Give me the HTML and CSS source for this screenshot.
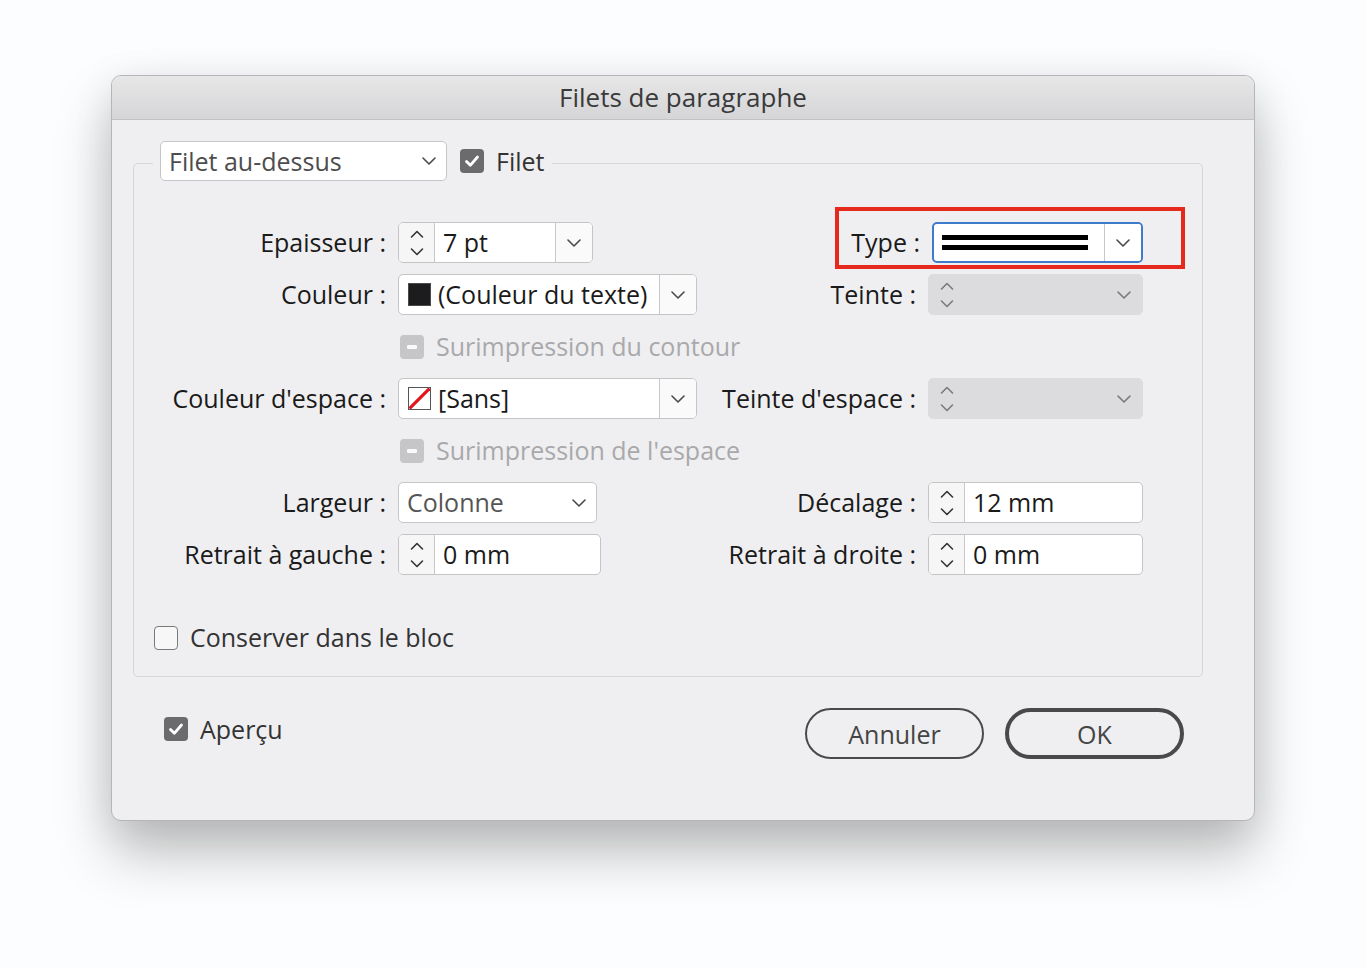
FILE: index.html
```html
<!DOCTYPE html>
<html lang="fr">
<head>
  <meta charset="UTF-8">
  <meta name="viewport" content="width=device-width, initial-scale=1.0">
  <title>Filets de paragraphe</title>
  <link rel="stylesheet" href="styles.css">
</head>
<body>
  <div class="dialog">
    <div class="titlebar">Filets de paragraphe</div>

    <fieldset class="group">
      <legend class="group-legend">
        <div class="group-head">
          <div class="select select-rule">
            <span>Filet au-dessus</span>
            <svg class="chev" width="14" height="8" viewBox="0 0 14 8"><path d="M1 1l6 6 6-6"/></svg>
          </div>
          <label class="check">
            <span class="box box-on"><svg width="24" height="24" viewBox="0 0 24 24"><path d="M6.5 12.5l3.8 3.8 7.2-8.3"/></svg></span>
            Filet
          </label>
        </div>
      </legend>

      <div class="form-grid">
        <div class="label">Epaisseur :</div>
        <div class="combo combo-weight">
          <div class="spin"><svg width="14" height="26" viewBox="0 0 14 26"><path d="M1.5 7l5.5-5.5 5.5 5.5M1.5 19l5.5 5.5 5.5-5.5"/></svg></div>
          <div class="field">7 pt</div>
          <div class="drop"><svg class="chev" width="14" height="8" viewBox="0 0 14 8"><path d="M1 1l6 6 6-6"/></svg></div>
        </div>
        <div class="label label-type">Type :</div>
        <div class="combo combo-type">
          <div class="field">
            <div class="double-line"><span></span><span></span></div>
          </div>
          <div class="drop"><svg class="chev" width="14" height="8" viewBox="0 0 14 8"><path d="M1 1l6 6 6-6"/></svg></div>
        </div>

        <div class="label">Couleur :</div>
        <div class="combo combo-color">
          <div class="field field-swatch"><span class="swatch swatch-black"></span>(Couleur du texte)</div>
          <div class="drop"><svg class="chev" width="14" height="8" viewBox="0 0 14 8"><path d="M1 1l6 6 6-6"/></svg></div>
        </div>
        <div class="label">Teinte :</div>
        <div class="combo combo-off">
          <div class="spin"><svg width="14" height="26" viewBox="0 0 14 26"><path d="M1.5 7l5.5-5.5 5.5 5.5M1.5 19l5.5 5.5 5.5-5.5"/></svg></div>
          <div class="field"></div>
          <div class="drop"><svg class="chev" width="14" height="8" viewBox="0 0 14 8"><path d="M1 1l6 6 6-6"/></svg></div>
        </div>

        <label class="check check-off row-span">
          <span class="box box-mixed"><span class="dash"></span></span>
          Surimpression du contour
        </label>

        <div class="label">Couleur d'espace :</div>
        <div class="combo combo-color">
          <div class="field field-swatch">
            <span class="swatch swatch-none"><svg width="23" height="23" viewBox="0 0 23 23"><path d="M1.5 21.5l20-20"/></svg></span>[Sans]
          </div>
          <div class="drop"><svg class="chev" width="14" height="8" viewBox="0 0 14 8"><path d="M1 1l6 6 6-6"/></svg></div>
        </div>
        <div class="label">Teinte d'espace :</div>
        <div class="combo combo-off">
          <div class="spin"><svg width="14" height="26" viewBox="0 0 14 26"><path d="M1.5 7l5.5-5.5 5.5 5.5M1.5 19l5.5 5.5 5.5-5.5"/></svg></div>
          <div class="field"></div>
          <div class="drop"><svg class="chev" width="14" height="8" viewBox="0 0 14 8"><path d="M1 1l6 6 6-6"/></svg></div>
        </div>

        <label class="check check-off row-span">
          <span class="box box-mixed"><span class="dash"></span></span>
          Surimpression de l'espace
        </label>

        <div class="label">Largeur :</div>
        <div class="select select-width">
          <span>Colonne</span>
          <svg class="chev" width="14" height="8" viewBox="0 0 14 8"><path d="M1 1l6 6 6-6"/></svg>
        </div>
        <div class="label">Décalage :</div>
        <div class="combo combo-num">
          <div class="spin"><svg width="14" height="26" viewBox="0 0 14 26"><path d="M1.5 7l5.5-5.5 5.5 5.5M1.5 19l5.5 5.5 5.5-5.5"/></svg></div>
          <div class="field">12 mm</div>
        </div>

        <div class="label">Retrait à gauche :</div>
        <div class="combo combo-indent">
          <div class="spin"><svg width="14" height="26" viewBox="0 0 14 26"><path d="M1.5 7l5.5-5.5 5.5 5.5M1.5 19l5.5 5.5 5.5-5.5"/></svg></div>
          <div class="field">0 mm</div>
        </div>
        <div class="label">Retrait à droite :</div>
        <div class="combo combo-num">
          <div class="spin"><svg width="14" height="26" viewBox="0 0 14 26"><path d="M1.5 7l5.5-5.5 5.5 5.5M1.5 19l5.5 5.5 5.5-5.5"/></svg></div>
          <div class="field">0 mm</div>
        </div>
      </div>

      <label class="check check-keep">
        <span class="box box-empty"></span>
        Conserver dans le bloc
      </label>
    </fieldset>

    <div class="footer">
      <label class="check check-preview">
        <span class="box box-on"><svg width="24" height="24" viewBox="0 0 24 24"><path d="M6.5 12.5l3.8 3.8 7.2-8.3"/></svg></span>
        Aperçu
      </label>
      <div class="buttons">
        <button class="btn">Annuler</button>
        <button class="btn btn-default">OK</button>
      </div>
    </div>

    <div class="highlight"></div>
  </div>
</body>
</html>
```

FILE: styles.css
```css
html {
  background: #fcfdfe;
}
body {
  margin: 0;
  min-height: 968px;
  overflow: hidden;
  padding-top: 75px;
  box-sizing: border-box;
  font-family: "Open Sans", "Liberation Sans", sans-serif;
  font-size: 25px;
  color: #1a1a1a;
}
.dialog {
  position: relative;
  box-sizing: border-box;
  width: 1144px;
  height: 746px;
  margin-left: 111px;
  background: #efeff1;
  border: 1px solid #b6b6b8;
  border-radius: 10px;
  box-shadow: 0 32px 55px rgba(0,0,0,0.25), 0 6px 40px rgba(0,0,0,0.08);
}
.titlebar {
  height: 43px;
  line-height: 43px;
  text-align: center;
  font-size: 26px;
  color: #3a3a3a;
  background: linear-gradient(#e7e7e8, #d5d5d7);
  border-bottom: 1px solid #c2c2c4;
  border-radius: 9px 9px 0 0;
}
.group {
  box-sizing: border-box;
  width: 1070px;
  margin: 21px 0 0 21px;
  padding: 37px 0 18px;
  border: 1.5px solid #d6d6d8;
  border-radius: 5px;
  min-width: 0;
}
.group-legend {
  margin-left: 19px;
  padding: 0 8px 4px 7px;
}
.group-head {
  display: flex;
  align-items: center;
  gap: 13px;
}
svg path {
  fill: none;
  stroke: #4a4a4a;
  stroke-width: 1.6;
  stroke-linecap: round;
  stroke-linejoin: round;
}
.select {
  box-sizing: border-box;
  display: flex;
  align-items: center;
  justify-content: space-between;
  height: 40px;
  padding: 0 10px 0 8px;
  background: #fff;
  border: 1.5px solid #c6c6c8;
  border-radius: 5px;
  color: #4d4d4d;
  line-height: 1;
}
.select-rule {
  width: 287px;
}
.select-width {
  width: 199px;
  height: 41px;
  color: #555;
}
.check {
  display: flex;
  align-items: center;
  gap: 12px;
  line-height: 1;
  color: #333;
}
.box {
  box-sizing: border-box;
  flex: none;
  display: flex;
  align-items: center;
  justify-content: center;
  width: 24px;
  height: 24px;
  border-radius: 4px;
}
.box-on {
  background: #6b6b6d;
}
.box-on svg path {
  stroke: #fff;
  stroke-width: 2.8;
}
.box-mixed {
  background: #c6c6c8;
}
.box-mixed .dash {
  width: 10px;
  height: 4px;
  border-radius: 1px;
  background: #fafafa;
}
.box-empty {
  border: 1.5px solid #7a7a7c;
  background: #f7f7f8;
}
.form-grid {
  display: grid;
  grid-template-columns: 252px 300px 206px 215px;
  grid-auto-rows: 41px;
  column-gap: 12px;
  row-gap: 11px;
  align-items: center;
}
.label {
  text-align: right;
  white-space: nowrap;
  line-height: 1;
}
.label-type {
  margin-right: -4px;
}
.row-span {
  grid-column: 2 / span 3;
  padding-left: 2px;
}
.check-off {
  color: #a9a9ab;
}
.combo {
  box-sizing: border-box;
  display: flex;
  height: 41px;
  background: #fff;
  border: 1.5px solid #c4c4c6;
  border-radius: 5px;
  overflow: hidden;
  justify-self: start;
}
.spin {
  flex: none;
  width: 35px;
  display: flex;
  align-items: center;
  justify-content: center;
  background: #f6f6f7;
  border-right: 1.5px solid #c8c8ca;
}
.spin svg path {
  stroke: #333;
}
.field {
  flex: 1;
  display: flex;
  align-items: center;
  padding-left: 8px;
  line-height: 1;
  white-space: nowrap;
}
.drop {
  flex: none;
  width: 36px;
  display: flex;
  align-items: center;
  justify-content: center;
  background: #fafafa;
  border-left: 1.5px solid #c8c8ca;
}
.combo-weight {
  width: 195px;
}
.combo-color {
  width: 299px;
}
.combo-indent {
  width: 203px;
}
.combo-num,
.combo-off {
  width: 215px;
}
.combo-type {
  width: 211px;
  margin-left: 4px;
  border: 2px solid #3f7bcc;
}
.combo-type .drop {
  background: #fff;
}
.double-line {
  display: flex;
  flex-direction: column;
  gap: 5px;
  width: 146px;
}
.double-line span {
  height: 5px;
  background: #000;
}
.combo-off {
  background: #dcdcde;
  border-color: #dcdcde;
}
.combo-off .spin,
.combo-off .drop {
  background: transparent;
  border: none;
}
.combo-off .spin svg path,
.combo-off .drop svg path {
  stroke: #7a7a7c;
}
.field-swatch {
  gap: 7px;
  padding-left: 9px;
}
.swatch {
  box-sizing: border-box;
  flex: none;
  width: 23px;
  height: 23px;
}
.swatch-black {
  background: #1c1c1e;
  border: 1.5px solid #4a4a4a;
}
.swatch-none {
  background: #fff;
  border: 1.5px solid #555;
  overflow: hidden;
}
.swatch-none svg {
  display: block;
  margin: -1.5px;
}
.swatch-none svg path {
  stroke: #e3141c;
  stroke-width: 3.2;
  stroke-linecap: butt;
}
.check-keep {
  height: 41px;
  margin: 42px 0 0 20px;
}
.footer {
  display: flex;
  padding: 31px 70px 0 52px;
}
.check-preview {
  height: 24px;
  margin-top: 9px;
}
.buttons {
  display: flex;
  gap: 21px;
  margin-left: auto;
}
.btn {
  box-sizing: border-box;
  width: 179px;
  height: 51px;
  background: transparent;
  border: 2px solid #4a4a4c;
  border-radius: 26px;
  font-family: inherit;
  font-size: 25px;
  color: #444;
}
.btn-default {
  border: 4px solid #49494b;
}
.highlight {
  position: absolute;
  left: 723px;
  top: 131px;
  width: 350px;
  height: 62px;
  box-sizing: border-box;
  border: 4px solid #e5291c;
}
```
